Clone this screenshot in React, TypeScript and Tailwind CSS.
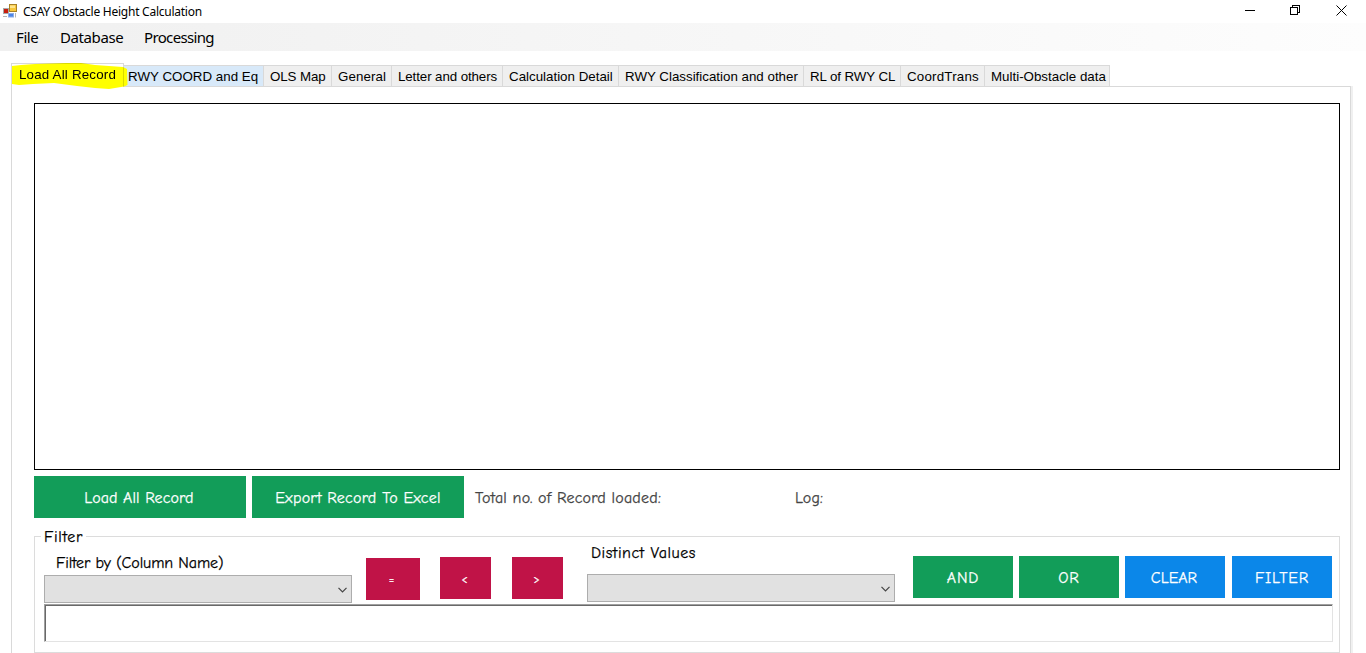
import React from "react";

const comic = "font-['Comic_Sans_MS','Comic_Neue',Lato,cursive] leading-5 whitespace-nowrap [-webkit-text-stroke:0.25px]";

const tabs = [
  { label: "RWY COORD and Eq", box: "w-[139px] pl-[4px] bg-[#d8e9f9] tracking-[0.02px]" },
  { label: "OLS Map", box: "w-[68px] pl-[6px] bg-[#efefef] border-l tracking-[-0.1px]" },
  { label: "General", box: "w-[60px] pl-[6px] bg-[#efefef] border-l tracking-[0.1px]" },
  { label: "Letter and others", box: "w-[111px] pl-[6px] bg-[#efefef] border-l tracking-[-0.1px]" },
  { label: "Calculation Detail", box: "w-[116px] pl-[6px] bg-[#efefef] border-l" },
  { label: "RWY Classification and other", box: "w-[185px] pl-[6px] bg-[#efefef] border-l" },
  { label: "RL of RWY CL", box: "w-[97px] pl-[6px] bg-[#efefef] border-l tracking-[-0.1px]" },
  { label: "CoordTrans", box: "w-[84px] pl-[6px] bg-[#efefef] border-l tracking-[0.2px]" },
  { label: "Multi-Obstacle data", box: "w-[126px] pl-[6px] bg-[#efefef] border-x" },
];

function AppIcon() {
  return (
    <svg width="15" height="15" viewBox="0 0 15 15" className="shrink-0">
      <rect x="0.5" y="4.5" width="5" height="5" fill="#c81e0e" stroke="#a9a9a9" />
      <rect x="6.5" y="0.5" width="7" height="7" fill="#f8c83c" stroke="#a98226" />
      <rect x="7" y="1.5" width="5" height="2.5" fill="#ffe58c" />
      <rect x="5.5" y="9.5" width="5" height="3.500" fill="#4d86e8" stroke="#8eaee8" />
      <path d="M0 12.500h4M12.500 9v4.500" stroke="#b4b4b4" />
    </svg>
  );
}

function TitleBar() {
  return (
    <header className="flex h-[23px] items-center bg-white pl-[3px]">
      <AppIcon />
      <h1 className="ml-[5px] pt-px font-['Segoe_UI','Noto_Sans',sans-serif] text-[12px] leading-4 tracking-[-0.25px]">
        CSAY Obstacle Height Calculation
      </h1>
      <div className="mr-[19px] mb-[3px] ml-auto flex items-center gap-[35px]">
        <svg width="10" height="11" shapeRendering="crispEdges"><path d="M0 5.5h10" stroke="#000" /></svg>
        <svg width="11" height="11" fill="none" stroke="#000" shapeRendering="crispEdges">
          <rect x="0.5" y="2.5" width="7" height="7" />
          <path d="M2.5 2.5v-2h7v7h-2" />
        </svg>
        <svg width="11" height="11" fill="none" stroke="#000"><path d="M0.5 0.5l10 10M10.5 0.5l-10 10" /></svg>
      </div>
    </header>
  );
}

function Combo() {
  return (
    <div className="flex h-7 w-[308px] items-center justify-end border border-[#adadad] bg-[#e1e1e1] pr-[4px]">
      <svg width="9" height="6" fill="none" stroke="#444" strokeWidth="1.2" className="mt-[2px]">
        <path d="M0.5 0.8L4.5 4.8L8.5 0.8" />
      </svg>
    </div>
  );
}

export default function App() {
  return (
    <div className="h-[653px] w-[1366px] overflow-hidden bg-white text-black">
      <TitleBar />
      <nav className="flex h-7 items-center bg-linear-to-r from-[#f0f0f0] to-[#fdfdfd] pl-4 font-['Segoe_UI','Noto_Sans',sans-serif] text-[15px]">
        <span className="w-11 tracking-[-0.4px]">File</span>
        <span className="w-21 tracking-[-0.4px]">Database</span>
        <span className="tracking-[-0.65px]">Processing</span>
      </nav>

      <div className="mt-3 ml-[11px] flex h-6 items-end font-['Liberation_Sans',Arial,sans-serif] text-[13.33px] whitespace-nowrap">
        <div className="relative z-10 h-6 w-[113px] border border-b-0 border-[#d9d9d9] bg-white pl-[7px] leading-[21px] tracking-[0.2px]">
          Load All Record
          <svg width="118" height="28" className="absolute -top-px -left-px mix-blend-multiply">
            <path d="M1 3L10 2L24 1L55 0L70 0L84 2L98 3L112 4L116 6L116.500 22L113 23.500L98 26L84 25L66 23L43 20L22 21L8 22L1 21Z" fill="#ff0" />
          </svg>
        </div>
        {tabs.map((t) => (
          <div key={t.label} className={`h-[22px] border-y border-[#d9d9d9] leading-[21px] ${t.box}`}>
            {t.label}
          </div>
        ))}
      </div>

      <main className="-mt-px ml-[11px] h-[567px] w-[1342px] border-r-2 border-[#f0f0f0]">
        <div className="h-full w-[1340px] border border-b-0 border-[#d9d9d9] pt-4 pr-[10px] pl-[22px]">
          <div className="h-[367px] border border-black" />

          <div className="mt-[6px] flex h-[42px] items-center text-[#444]">
            <button className={`h-[42px] w-[212px] bg-[#129d59] pt-[2px] pr-[2px] text-[16px] text-white tracking-[0.1px] ${comic}`}>Load All Record</button>
            <button className={`ml-[6px] h-[42px] w-[212px] bg-[#129d59] pt-[2px] text-[16px] text-white tracking-[0.23px] ${comic}`}>Export Record To Excel</button>
            <span className={`ml-[11px] w-[320px] pt-[2px] text-[16px] tracking-[0.2px] ${comic}`}>Total no. of Record loaded:</span>
            <span className={`pt-[2px] text-[16px] tracking-[0.1px] ${comic}`}>Log:</span>
          </div>

          <fieldset className="mt-[8px] h-[127px] border border-[#dcdcdc] pr-[6px] pl-[9px]">
            <legend className={`-ml-[3px] h-5 px-[3px] pt-px text-[16px] tracking-[0.7px] ${comic}`}>Filter</legend>
            <div className="flex h-[58px] items-start">
              <div className="w-[322px] pt-[7px]">
                <div className={`mb-[2px] pl-3 text-[16px] tracking-[-0.1px] ${comic}`}>Filter by (Column Name)</div>
                <Combo />
              </div>
              <button className={`mt-[12px] h-[42px] w-[54px] bg-[#c01347] pt-[2px] pr-[3px] text-[12px] text-white ${comic}`}>=</button>
              <button className={`mt-[11px] ml-5 h-[42px] w-[51px] bg-[#c01347] pt-[2px] pr-[2px] text-[12px] text-white ${comic}`}>&lt;</button>
              <button className={`mt-[11px] ml-[21px] h-[42px] w-[51px] bg-[#c01347] pt-[2px] pr-[2px] text-[12px] text-white ${comic}`}>&gt;</button>
              <div className="ml-6 w-[326px]">
                <div className={`-mt-[3px] mb-[11px] pl-1 text-[16px] tracking-[0.5px] ${comic}`}>Distinct Values</div>
                <Combo />
              </div>
              <button className={`mt-[10px] h-[42px] w-[100px] bg-[#129d59] pt-[2px] text-[16px] text-white tracking-[0.8px] ${comic}`}>AND</button>
              <button className={`mt-[10px] ml-[6px] h-[42px] w-[100px] bg-[#129d59] pt-[2px] text-[16px] text-white tracking-[0.8px] ${comic}`}>OR</button>
              <button className={`mt-[10px] ml-[6px] h-[42px] w-[100px] bg-[#0b87e9] pt-[2px] pr-[2px] text-[16px] text-white ${comic}`}>CLEAR</button>
              <button className={`mt-[10px] ml-[7px] h-[42px] w-[100px] bg-[#0b87e9] pt-[2px] text-[16px] text-white tracking-[0.7px] ${comic}`}>FILTER</button>
            </div>
            <div className="h-[38px] w-[1289px] border border-t-[#a0a0a0] border-r-[#e3e3e3] border-b-[#e3e3e3] border-l-[#a0a0a0]">
              <div className="h-full border-t border-l border-[#696969]" />
            </div>
          </fieldset>
        </div>
      </main>
    </div>
  );
}
